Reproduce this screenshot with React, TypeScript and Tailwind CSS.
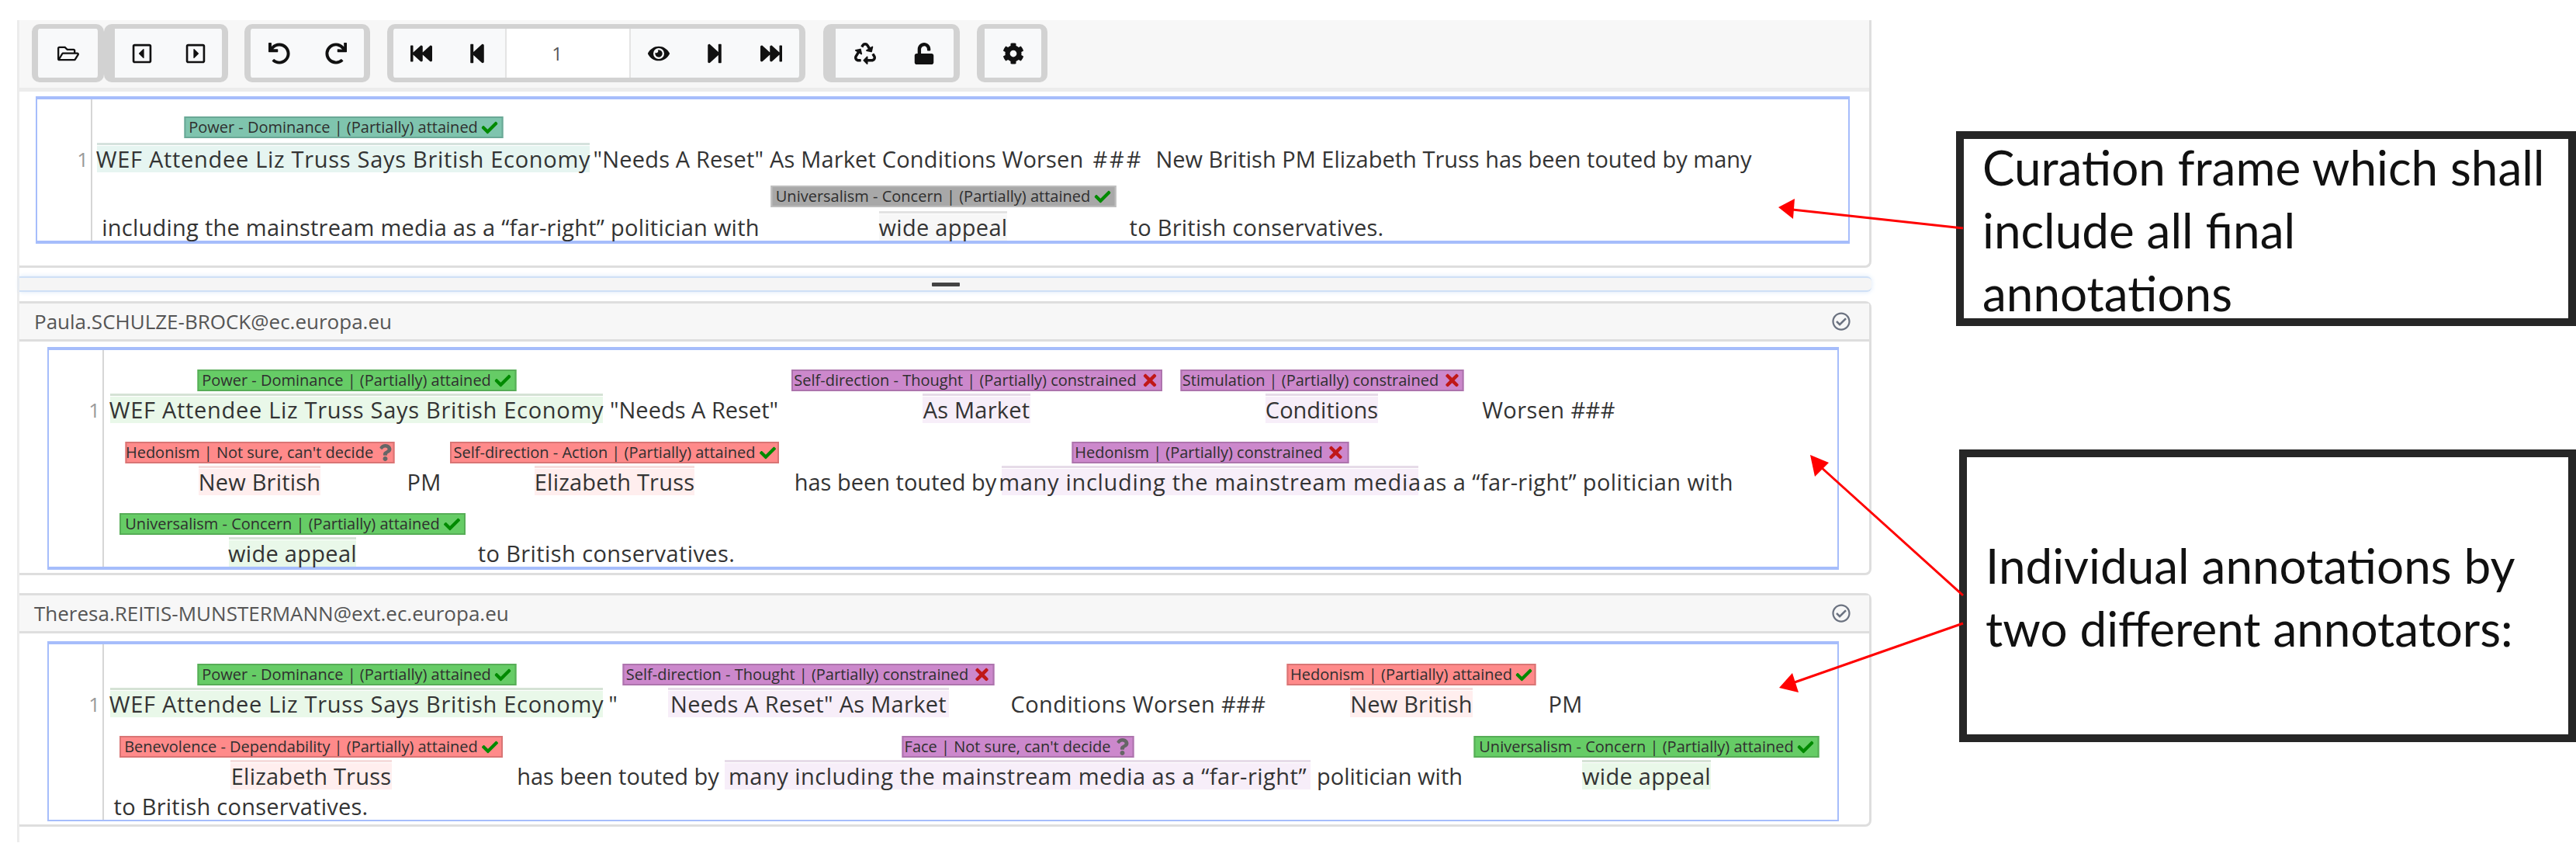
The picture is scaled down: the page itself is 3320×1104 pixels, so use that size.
import React from "react";
import {
  FaRegFolderOpen, FaRegCaretSquareLeft, FaRegCaretSquareRight, FaUndo, FaRedo, FaFastBackward, FaStepBackward,
  FaEye, FaStepForward, FaFastForward, FaRecycle, FaUnlock, FaCog, FaCheck, FaTimes, FaQuestion, FaRegCheckCircle,
} from "react-icons/fa";

type Kind = "teal" | "gray" | "green" | "red" | "purple";
type Mark = "check" | "cross" | "bulb";

const TAG: Record<Kind, string> = {
  teal: "bg-[#7fc4ae] border-[#6aa896]",
  gray: "bg-[#a8a8a8] border-[#bdbdbd]",
  green: "bg-[#66cc66] border-[#57ad57]",
  red: "bg-[#ff8a8a] border-[#d97575]",
  purple: "bg-[#cc88cc] border-[#ad74ad]",
};
const HL: Record<Kind, string> = {
  teal: "bg-[#e6f5f1]",
  gray: "bg-[#f7f7f7]",
  green: "bg-[#e9f8e9]",
  red: "bg-[#ffeeee]",
  purple: "bg-[#f7eef9]",
};
const BRACKET: Record<Kind, string> = {
  teal: "bg-[#d5e2dd]",
  gray: "bg-[#e2e2e2]",
  green: "bg-[#d5e2d5]",
  red: "bg-[#f5dcdc]",
  purple: "bg-[#e6dbe8]",
};

function Icon({ mark }: { mark: Mark }) {
  if (mark === "check") return <FaCheck className="ml-[5px] size-[21px] shrink-0 text-[#008a00]" />;
  if (mark === "cross") return <FaTimes className="ml-[5px] size-[24px] shrink-0 text-[#c01818]" />;
  return <FaQuestion className="ml-[4px] size-[22px] shrink-0 text-[#666666]" />;
}

function Seg({ className, text, kind, label, mark, tagW, gap }: {
  className: string; text: string; kind?: Kind; label?: string; mark?: Mark; tagW?: string; gap?: string;
}) {
  return (
    <span className={`relative block h-full shrink-0 ${className} ${kind ? HL[kind] : ""}`}>
      <span className="absolute inset-0 flex items-center justify-center whitespace-nowrap">{text}</span>
      {kind && <span className={`absolute inset-x-0 -top-[4px] h-[3px] ${BRACKET[kind]}`} />}
      {kind && (
        <span className={`absolute left-1/2 flex h-[28px] -translate-x-1/2 items-center justify-center whitespace-nowrap border-2 text-[20px] tracking-normal leading-none text-[#2f2f2f] ${gap ?? "bottom-[calc(100%+7px)]"} ${tagW} ${TAG[kind]}`}>
          {label}
          {mark && <Icon mark={mark} />}
        </span>
      )}
    </span>
  );
}

function Btn({ children }: { children: React.ReactNode }) {
  return <div className="flex flex-1 items-center justify-center text-[28px] text-[#111111]">{children}</div>;
}

const group = "flex h-[75px] rounded-[10px] border-y-[6px] border-x-[8px] border-[#d2d2d2] bg-[#f8f9fa]";

function Toolbar() {
  return (
    <div className="flex h-[92px] items-start border-b-[5px] border-[#ececec] bg-[#f7f7f7] pl-[16px] pt-[5px]">
      <div className={`${group} w-[93px]`}><Btn><FaRegFolderOpen /></Btn></div>
      <div className={`${group} w-[160px] !border-l-[14px]`}><Btn><FaRegCaretSquareLeft /></Btn><Btn><FaRegCaretSquareRight /></Btn></div>
      <div className={`${group} ml-[21px] w-[162px]`}><Btn><FaUndo /></Btn><Btn><FaRedo /></Btn></div>
      <div className={`${group} ml-[22px] w-[539px]`}>
        <div className="flex w-[144px]"><Btn><FaFastBackward /></Btn><Btn><FaStepBackward /></Btn></div>
        <div className="flex w-[162px] items-center justify-center border-x-2 border-[#e4e4e4] bg-white pr-[28px] text-[24px] tracking-normal text-[#555555]">1</div>
        <div className="flex flex-1"><Btn><FaEye /></Btn><Btn><FaStepForward /></Btn><Btn><FaFastForward /></Btn></div>
      </div>
      <div className={`${group} ml-[23px] w-[176px] !border-l-[16px]`}><Btn><FaRecycle /></Btn><Btn><FaUnlock /></Btn></div>
      <div className={`${group} ml-[22px] w-[91px] !border-l-[10px]`}><Btn><FaCog /></Btn></div>
    </div>
  );
}

function Frame({ className, first, children }: { className: string; first: string; children: React.ReactNode }) {
  return (
    <div className={`flex border-x-2 border-t-4 border-[#a6bdfb] ${className}`}>
      <div className={`w-[71px] shrink-0 border-r-2 border-[#d6d6d6] pr-[3px] text-right text-[26px] leading-[34px] tracking-normal text-[#999999] ${first}`}>1</div>
      <div className="flex min-w-0 flex-1 flex-col">{children}</div>
    </div>
  );
}

const row = "flex h-[34px] shrink-0";

function Header({ name }: { name: string }) {
  return (
    <div className="flex h-[49px] items-center justify-between border-b-[3px] border-[#dedede] bg-[#f7f7f7] pl-[19px] pr-[24px] text-[#555555]">
      <span className="text-[26px] tracking-normal">{name}</span>
      <FaRegCheckCircle className="size-[24px] text-[#6b7280]" />
    </div>
  );
}

const PF = "Power - Dominance | (Partially) attained";
const UC = "Universalism - Concern | (Partially) attained";
const WEF = "WEF Attendee Liz Truss Says British Economy";
const TH = "Self-direction - Thought | (Partially) constrained";
const MANY = "many including the mainstream media";

export default function App() {
  return (
    <div className="relative flex h-[1104px] w-[3320px] overflow-hidden bg-white text-[29px] tracking-[0.2px] text-[#333333] [font-family:'Open_Sans','Liberation_Sans',sans-serif]">
      <div className="ml-[22px] mt-[26px] h-[1059px] w-[2390px] shrink-0 border-l-[3px] border-[#ececec]">
        <section className="h-[319px] rounded-br-[8px] border-b-[3px] border-r-[3px] border-[#dedede]">
          <Toolbar />
          <Frame className="ml-[21px] mr-[25px] mt-[6px] h-[190px] border-b-4" first="pt-[60px]">
            <div className={`${row} mt-[60px]`}>
              <Seg className="ml-[6px] w-[635px] tracking-[0.7px]" text={WEF} kind="teal" label={PF} mark="check" tagW="w-[411px]" gap="bottom-[calc(100%+10px)]" />
              <Seg className="ml-[9px] w-[623px] tracking-[0.17px]" text={'"Needs A Reset" As Market Conditions Worsen'} />
              <Seg className="ml-[16px] w-[66px] tracking-[3px]" text="###" />
              <Seg className="ml-[16px] w-[767px] tracking-[0px]" text="New British PM Elizabeth Truss has been touted by many" />
            </div>
            <div className={`${row} mt-[54px]`}>
              <Seg className="ml-[12px] w-[848px] tracking-[0.25px]" text={"including the mainstream media as a \u201cfar-right\u201d politician with"} />
              <Seg className="ml-[154px] w-[165px] tracking-[0.3px]" text="wide appeal" kind="gray" label={UC} mark="check" tagW="w-[445px]" gap="bottom-[calc(100%+9px)]" />
              <Seg className="ml-[158px] w-[327px] tracking-[0.25px]" text="to British conservatives." />
            </div>
          </Frame>
        </section>

        <div className="mt-[11px] flex h-[20px] items-center justify-center rounded-r-[6px] border-y-2 border-[#cfe0f6] bg-[#f5f5f5] shadow-[0_0_6px_#d9e7f8]">
          <span className="h-[5px] w-[36px] rounded-[1px] bg-[#444444]" />
        </div>

        <section className="mt-[12px] h-[353px] rounded-r-[8px] border-b-[3px] border-r-[3px] border-t-[3px] border-[#dedede] pb-[4px]">
          <Header name="Paula.SCHULZE-BROCK@ec.europa.eu" />
          <Frame className="ml-[36px] mr-[39px] mt-[7px] h-[287px] border-b-4" first="pt-[60px]">
            <div className={`${row} mt-[60px]`}>
              <Seg className="ml-[8px] w-[635px] tracking-[0.7px]" text={WEF} kind="green" label={PF} mark="check" tagW="w-[411px]" />
              <Seg className="ml-[10px] w-[215px] tracking-[0px]" text={'"Needs A Reset"'} />
              <Seg className="ml-[187px] w-[139px]" text="As Market" kind="purple" label={TH} mark="cross" tagW="w-[478px]" />
              <Seg className="ml-[303px] w-[145px] tracking-[0px]" text="Conditions" kind="purple" label="Stimulation | (Partially) constrained" mark="cross" tagW="w-[365px]" />
              <Seg className="ml-[129px] w-[182px] tracking-[0.4px]" text="Worsen ###" />
            </div>
            <div className={`${row} mt-[59px]`}>
              <Seg className="ml-[122px] w-[157px]" text="New British" kind="red" label="Hedonism | Not sure, can't decide" mark="bulb" tagW="w-[347px]" />
              <Seg className="ml-[115px] w-[37px]" text="PM" />
              <Seg className="ml-[124px] w-[206px]" text="Elizabeth Truss" kind="red" label="Self-direction - Action | (Partially) attained" mark="check" tagW="w-[424px]" />
              <Seg className="ml-[130px] w-[258px] tracking-[0px]" text="has been touted by" />
              <Seg className="ml-[8px] w-[537px] tracking-[0.7px]" text={MANY} kind="purple" label="Hedonism | (Partially) constrained" mark="cross" tagW="w-[357px]" />
              <Seg className="ml-[6px] w-[400px] tracking-[0.4px]" text={"as a \u201cfar-right\u201d politician with"} />
            </div>
            <div className={`${row} mt-[58px]`}>
              <Seg className="ml-[161px] w-[164px] tracking-[0.3px]" text="wide appeal" kind="green" label={UC} mark="check" tagW="w-[446px]" />
              <Seg className="ml-[157px] w-[331px] tracking-[0.4px]" text="to British conservatives." />
            </div>
          </Frame>
        </section>

        <section className="mt-[23px] h-[301px] rounded-r-[8px] border-b-[3px] border-r-[3px] border-t-[3px] border-[#dedede]">
          <Header name="Theresa.REITIS-MUNSTERMANN@ext.ec.europa.eu" />
          <Frame className="ml-[36px] mr-[39px] mt-[10px] h-[232px] border-b-2" first="pt-[60px]">
            <div className={`${row} mt-[60px]`}>
              <Seg className="ml-[8px] w-[635px] tracking-[0.7px]" text={WEF} kind="green" label={PF} mark="check" tagW="w-[411px]" />
              <Seg className="ml-[9px] w-[8px]" text={'"'} />
              <Seg className="ml-[67px] w-[362px] tracking-[0.3px]" text={'Needs A Reset" As Market'} kind="purple" label={TH} mark="cross" tagW="w-[479px]" />
              <Seg className="ml-[76px] w-[336px] tracking-[0.4px]" text="Conditions Worsen ###" />
              <Seg className="ml-[105px] w-[158px]" text="New British" kind="red" label="Hedonism | (Partially) attained" mark="check" tagW="w-[321px]" />
              <Seg className="ml-[100px] w-[39px]" text="PM" />
            </div>
            <div className={`${row} mt-[59px]`}>
              <Seg className="ml-[163px] w-[208px]" text="Elizabeth Truss" kind="red" label="Benevolence - Dependability | (Partially) attained" mark="check" tagW="w-[494px]" />
              <Seg className="ml-[162px] w-[259px] tracking-[0px]" text="has been touted by" />
              <Seg className="ml-[8px] w-[755px] tracking-[0.5px]" text={"many including the mainstream media as a \u201cfar-right\u201d"} kind="purple" label="Face | Not sure, can't decide" mark="bulb" tagW="w-[299px]" />
              <Seg className="ml-[8px] w-[188px] tracking-[0px]" text="politician with" />
              <Seg className="ml-[154px] w-[166px] tracking-[0.3px]" text="wide appeal" kind="green" label={UC} mark="check" tagW="w-[445px]" />
            </div>
            <div className={`${row} mt-[5px]`}>
              <Seg className="ml-[13px] w-[327px] tracking-[0.25px]" text="to British conservatives." />
            </div>
          </Frame>
        </section>
      </div>

      <div className="flex min-w-0 flex-1 flex-col text-[62px] leading-[81px] tracking-normal text-[#111111] [font-family:'Lato','Open_Sans',sans-serif]">
        <div className="ml-[109px] mt-[169px] h-[251px] border-[10px] border-[#262626] pl-[24px]">
          <div className="-mt-[4px] whitespace-nowrap">Curation frame which shall<br />include all final<br />annotations</div>
        </div>
        <div className="ml-[113px] mt-[159px] flex h-[377px] items-center border-[10px] border-[#262626] pl-[24px]">
          <div className="pt-[2px] whitespace-nowrap">Individual annotations by<br />two different annotators:</div>
        </div>
      </div>

      <svg className="pointer-events-none absolute inset-0" width="3320" height="1104" viewBox="0 0 3320 1104" fill="none">
        <line x1="2530" y1="294" x2="2310" y2="270" stroke="#ff0000" strokeWidth="3" />
        <polygon points="2292,267 2313,256 2311,282" fill="#ff0000" />
        <line x1="2530" y1="767" x2="2346" y2="601" stroke="#ff0000" strokeWidth="3" />
        <polygon points="2333,586 2357,596 2339,614" fill="#ff0000" />
        <line x1="2530" y1="803" x2="2310" y2="880" stroke="#ff0000" strokeWidth="3" />
        <polygon points="2293,886 2310,867 2318,892" fill="#ff0000" />
      </svg>
    </div>
  );
}
